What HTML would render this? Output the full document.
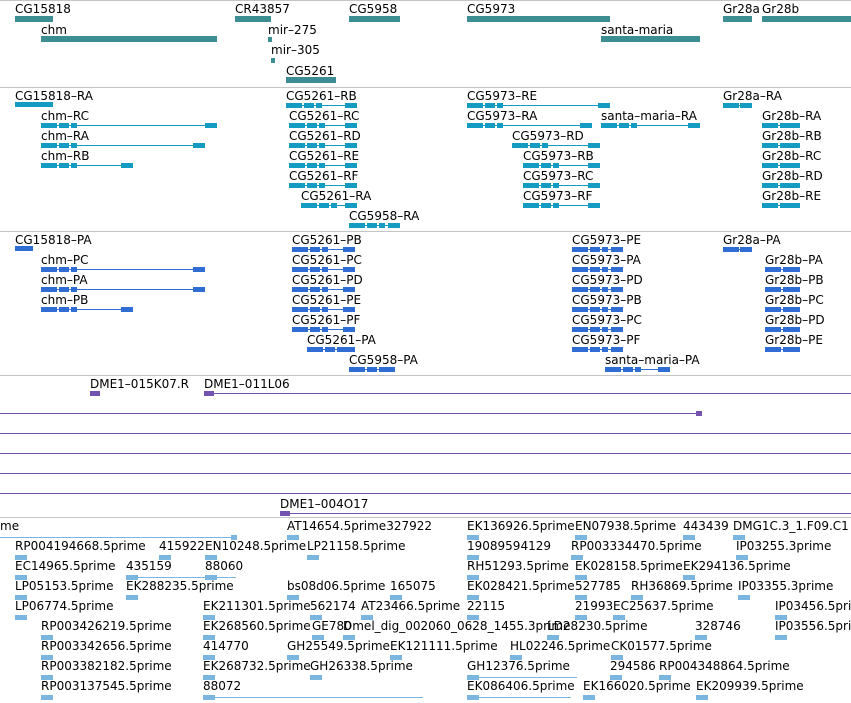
<!DOCTYPE html>
<html><head><meta charset="utf-8">
<style>
html,body{margin:0;padding:0;background:#fff;width:851px;height:703px;overflow:hidden;position:relative;font-family:"DejaVu Sans","Liberation Sans",sans-serif;}
.t{position:absolute;font-size:12px;line-height:13px;color:#000;white-space:nowrap;margin-top:1px;}
.b{position:absolute;}
.sep{position:absolute;left:0;width:851px;height:1px;background:#c4c4c4;}
</style></head><body>
<div class="sep" style="top:0"></div>
<div class="sep" style="top:87px"></div>
<div class="sep" style="top:231px"></div>
<div class="sep" style="top:375px"></div>
<div class="sep" style="top:517px"></div>
<script>
function T(x,y,s){document.write('<div class="t" style="left:'+x+'px;top:'+y+'px">'+s+'</div>');}
function B(x,y,w,h,c){document.write('<div class="b" style="left:'+x+'px;top:'+y+'px;width:'+w+'px;height:'+h+'px;background:'+c+'"></div>');}
var TE='#3d8e93',CY='#139bc2',BL='#2f6dd2',PU='#7452b0',LB='#7ab6e0';
[[15,2,'CG15818',15,38],[41,23,'chm',41,176,1],[235,2,'CR43857',235,36],[349,2,'CG5958',349,51],[467,2,'CG5973',467,143],[601,23,'santa-maria',601,99,1],[286,64,'CG5261',286,50,1],[723,2,'Gr28a',723,29],[762,2,'Gr28b',762,89]].forEach(function(a){T(a[0],a[1],a[2]);B(a[3],a[1]+(a[5]?13:14),a[4],6,TE);});
T(268,23,'mir\u2013275');B(268,37,4,5,TE);T(271,43,'mir\u2013305');B(271,58,4,5,TE);
function TR(x,y,s,x2,c){T(x,y,s);var ly=y+16;B(x,ly,x2-x,1,c);var w=x2-x;B(x,ly-2,Math.min(16,w),5,c);if(w>30){B(x+18,ly-2,10,5,c);}if(w>45)B(x+30,ly-2,6,5,c);B(x2-12,ly-2,12,5,c);}
T(15,89,'CG15818\u2013RA');B(15,102,38,5,CY);
TR(41,109,'chm\u2013RC',217,CY);TR(41,129,'chm\u2013RA',205,CY);TR(41,149,'chm\u2013RB',133,CY);
TR(286,89,'CG5261\u2013RB',357,CY);TR(289,109,'CG5261\u2013RC',357,CY);TR(289,129,'CG5261\u2013RD',357,CY);TR(289,149,'CG5261\u2013RE',357,CY);TR(289,169,'CG5261\u2013RF',357,CY);TR(301,189,'CG5261\u2013RA',357,CY);TR(349,209,'CG5958\u2013RA',400,CY);
TR(467,89,'CG5973\u2013RE',610,CY);TR(467,109,'CG5973\u2013RA',592,CY);TR(601,109,'santa\u2013maria\u2013RA',700,CY);TR(512,129,'CG5973\u2013RD',600,CY);TR(523,149,'CG5973\u2013RB',600,CY);TR(523,169,'CG5973\u2013RC',600,CY);TR(523,189,'CG5973\u2013RF',600,CY);
TR(723,89,'Gr28a\u2013RA',752,CY);['RA','RB','RC','RD','RE'].forEach(function(s,i){TR(762,109+20*i,'Gr28b\u2013'+s,800,CY);});
T(15,233,'CG15818\u2013PA');B(15,246,18,5,BL);
TR(41,253,'chm\u2013PC',205,BL);TR(41,273,'chm\u2013PA',205,BL);TR(41,293,'chm\u2013PB',133,BL);
['PB','PC','PD','PE','PF'].forEach(function(s,i){TR(292,233+20*i,'CG5261\u2013'+s,355,BL);});TR(307,333,'CG5261\u2013PA',355,BL);TR(349,353,'CG5958\u2013PA',395,BL);
['PE','PA','PD','PB','PC','PF'].forEach(function(s,i){TR(572,233+20*i,'CG5973\u2013'+s,623,BL);});TR(605,353,'santa\u2013maria\u2013PA',670,BL);
TR(723,233,'Gr28a\u2013PA',752,BL);['PA','PB','PC','PD','PE'].forEach(function(s,i){TR(765,253+20*i,'Gr28b\u2013'+s,800,BL);});
T(90,377,'DME1\u2013015K07.R');B(90,391,10,5,PU);T(204,377,'DME1\u2013011L06');B(204,393,647,1,PU);B(204,391,10,5,PU);
B(0,413,702,1,PU);B(696,411,6,5,PU);[433,453,473,493].forEach(function(y){B(0,y,851,1,PU);});
T(280,497,'DME1\u2013004O17');B(280,513,571,1,PU);B(280,511,10,5,PU);
var R=[[519,[[0,'me'],[287,'AT14654.5prime327922'],[467,'EK136926.5prime'],[575,'EN07938.5prime'],[683,'443439'],[733,'DMG1C.3_1.F09.C1']]],
[539,[[15,'RP004194668.5prime'],[159,'415922'],[205,'EN10248.5prime'],[307,'LP21158.5prime'],[467,'19089594129'],[571,'RP003334470.5prime'],[736,'IP03255.3prime']]],
[559,[[15,'EC14965.5prime'],[126,'435159'],[205,'88060'],[467,'RH51293.5prime'],[575,'EK028158.5prime'],[683,'EK294136.5prime']]],
[579,[[15,'LP05153.5prime'],[126,'EK288235.5prime'],[287,'bs08d06.5prime'],[390,'165075'],[467,'EK028421.5prime'],[575,'527785'],[631,'RH36869.5prime'],[738,'IP03355.3prime']]],
[599,[[15,'LP06774.5prime'],[203,'EK211301.5prime'],[310,'562174'],[361,'AT23466.5prime'],[467,'22115'],[575,'21993'],[613,'EC25637.5prime'],[775,'IP03456.5prime']]],
[619,[[41,'RP003426219.5prime'],[203,'EK268560.5prime'],[312,'GE780'],[343,'Dmel_dig_002060_0628_1455.3prime'],[547,'LD28230.5prime'],[695,'328746'],[775,'IP03556.5prime']]],
[639,[[41,'RP003342656.5prime'],[203,'414770'],[287,'GH25549.5prime'],[390,'EK121111.5prime'],[510,'HL02246.5prime'],[611,'CK01577.5prime']]],
[659,[[41,'RP003382182.5prime'],[203,'EK268732.5prime'],[310,'GH26338.5prime'],[467,'GH12376.5prime'],[610,'294586'],[659,'RP004348864.5prime']]],
[679,[[41,'RP003137545.5prime'],[203,'88072'],[467,'EK086406.5prime'],[583,'EK166020.5prime'],[696,'EK209939.5prime']]]];
R.forEach(function(r){r[1].forEach(function(a){T(a[0],r[0],a[1]);if(a[0]>0)B(a[0],r[0]+16,12,5,LB);});});
B(0,537,237,1,LB);B(231,535,6,5,LB);B(203,697,220,1,LB);B(467,697,104,1,LB);B(126,577,110,1,LB);B(467,677,110,1,LB);
</script>
</body></html>
